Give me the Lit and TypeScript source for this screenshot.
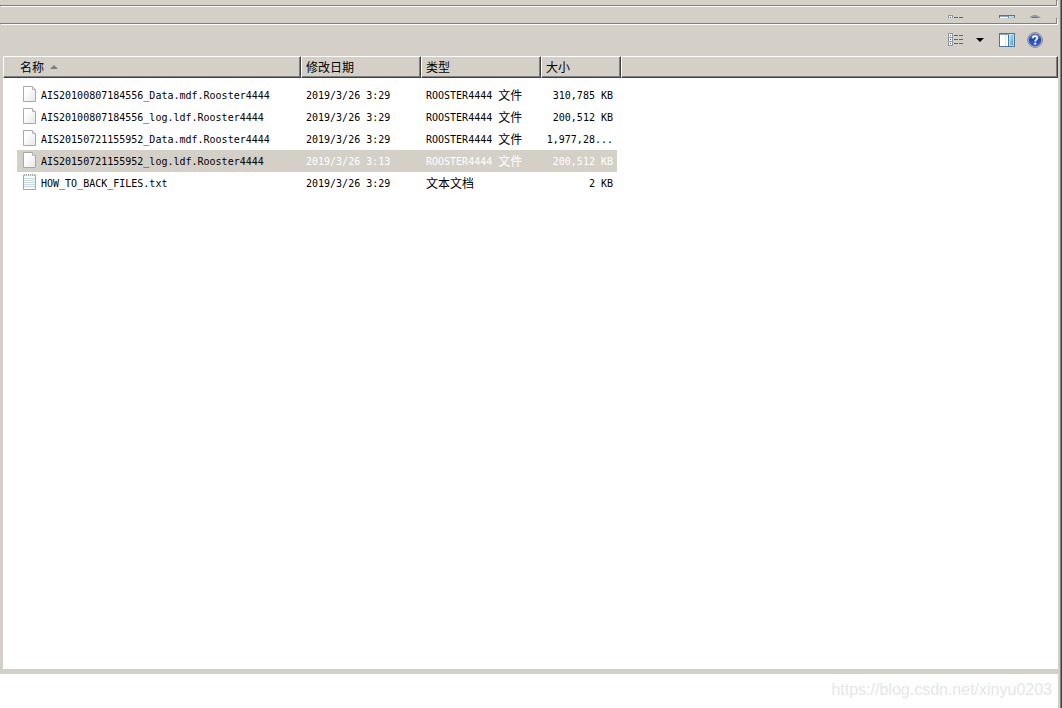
import { LitElement, html, css, svg } from "lit";
import { customElement, property, state } from "lit/decorators.js";

interface FileRow {
  name: string;
  date: string;
  kind: string;
  kindCjk: string;
  size: string;
  text?: boolean;
}

const FILES: FileRow[] = [
  { name: "AIS20100807184556_Data.mdf.Rooster4444", date: "2019/3/26 3:29", kind: "ROOSTER4444 ", kindCjk: "文件", size: "310,785 KB" },
  { name: "AIS20100807184556_log.ldf.Rooster4444", date: "2019/3/26 3:29", kind: "ROOSTER4444 ", kindCjk: "文件", size: "200,512 KB" },
  { name: "AIS20150721155952_Data.mdf.Rooster4444", date: "2019/3/26 3:29", kind: "ROOSTER4444 ", kindCjk: "文件", size: "1,977,28..." },
  { name: "AIS20150721155952_log.ldf.Rooster4444", date: "2019/3/26 3:13", kind: "ROOSTER4444 ", kindCjk: "文件", size: "200,512 KB" },
  { name: "HOW_TO_BACK_FILES.txt", date: "2019/3/26 3:29", kind: "", kindCjk: "文本文档", size: "2 KB", text: true },
];

const listIcon = svg`
  <g shape-rendering="crispEdges">
    <path d="M0 0h5v13H0z" fill="#8798ad"/>
    <path d="M1 1h3v3H1zM1 5h3v3H1zM1 9h3v3H1z" fill="#fff"/>
    <path d="M2 2h1v1H2z" fill="#2d6f96"/><path d="M2 6h1v1H2z" fill="#d01818"/><path d="M2 10h1v1H2z" fill="#2458c0"/>
    <path d="M6 2h4v1H6zM11 2h4v1h-4zM6 6h4v1H6zM11 6h4v1h-4zM6 10h4v1H6zM11 10h4v1h-4z" fill="#536779"/>
  </g>`;

const paneIcon = svg`
  <defs>
    <linearGradient id="pane" x2="1" y2="1"><stop stop-color="#b5e6f3"/><stop offset="1" stop-color="#4aa0c8"/></linearGradient>
  </defs>
  <g shape-rendering="crispEdges">
    <path d="M0 0h16v14H0z" fill="#51749c"/>
    <path d="M1 1h14v1H1z" fill="#86a8c8"/>
    <path d="M1 2h8v11H1z" fill="#fff"/>
    <path d="M6 2h1v11H6z" fill="#dce6ee"/>
    <path d="M10 1h5v12h-5z" fill="#a8e4f2"/>
    <path d="M11 2h3v10h-3z" fill="url(#pane)"/>
  </g>`;

const helpIcon = svg`
  <defs>
    <linearGradient id="orb" x2="0" y2="1"><stop stop-color="#6f91e4"/><stop offset=".45" stop-color="#2446b4"/><stop offset="1" stop-color="#3b69d4"/></linearGradient>
  </defs>
  <circle cx="8" cy="8" r="7.4" fill="#c6cad0" stroke="#858990"/>
  <circle cx="8" cy="8" r="6" fill="url(#orb)" stroke="#24439c" stroke-width=".7"/>
  <path d="M5.8 6.2C5.8 3.3 10.5 3.4 10.3 6.1C10.2 7.7 8.2 7.7 8.2 9.5" fill="none" stroke="#fff" stroke-width="1.8"/>
  <circle cx="8.2" cy="11.7" r="1.1" fill="#fff"/>`;

@customElement("file-icon")
class FileIcon extends LitElement {
  @property({ type: Boolean }) text = false;

  static styles = css`
    :host { display: block; width: 13px; height: 16px; flex: none; }
    .glyph { display: block; }
  `;

  render() {
    return this.text
      ? html`<svg class="glyph" width="13" height="16" viewBox="0 0 13 16" shape-rendering="crispEdges" aria-hidden="true">
          <path d="M0 1h13v15H0z" fill="#a8a8a8"/><path d="M1 2h11v13H1z" fill="#f8f9fa"/>
          <path d="M1 0h1v2H1zM3 0h1v2H3zM5 0h1v2H5zM7 0h1v2H7zM9 0h1v2H9zM11 0h1v2h-1z" fill="#aaa"/>
          <path d="M2 0h1v2H2zM4 0h1v2H4zM6 0h1v2H6zM8 0h1v2H8zM10 0h1v2h-1z" fill="#eee"/>
          <path d="M1 4h11v1H1zM1 6h11v1H1zM1 8h11v1H1zM1 10h11v1H1zM1 12h11v1H1z" fill="#cbdbe2"/>
        </svg>`
      : html`<svg class="glyph" width="13" height="16" viewBox="0 0 13 16" aria-hidden="true">
          <defs><linearGradient id="sheet" x2="1" y2="1"><stop offset=".3" stop-color="#fff"/><stop offset="1" stop-color="#e6e6e6"/></linearGradient></defs>
          <path d="M.5.5H9.500L12.500 3.500V15.500H.5Z" fill="url(#sheet)" stroke="#a8a8a8"/>
          <path d="M9.500.5V3.500H12.500" fill="#e8e8e8" stroke="#b4b4b4"/>
        </svg>`;
  }
}

@customElement("app-root")
class AppRoot extends LitElement {
  @state() private selected = 3;

  static styles = css`
    :host {
      display: block;
      min-height: 100vh;
      box-sizing: border-box;
      background: #fff;
      border-right: 1px solid #404040;
      color: #000;
      font: 10px/22px "DejaVu Sans Mono", "Noto Sans CJK SC", monospace;
    }
    .page { position: relative; min-height: 100vh; border-right: 1px solid #808080; box-sizing: border-box; }
    .frame { min-height: 100vh; border-right: 2px solid #d4d0c8; box-sizing: border-box; }
    .window { display: flex; flex-direction: column; height: calc(100vh - 34px); background: #d4d0c8; }
    .band {
      height: 6px;
      flex: none;
      box-sizing: border-box;
      margin: 0 1px 1px 0;
      border-right: 1px solid #808080;
      border-bottom: 1px solid #808080;
      box-shadow: 1px 1px #fff;
    }
    .strip { height: 11px; flex: none; display: flex; align-items: flex-end; justify-content: flex-end; }
    .ghost { display: flex; height: 3px; overflow: hidden; padding-right: 15px; }
    .tools { display: flex; justify-content: flex-end; align-items: center; height: 31px; flex: none; padding-right: 15px; }
    .strip svg { display: block; flex: none; }
    .gap { width: 35px; }
    .gap-small { width: 12px; }
    .tool { border: 0; background: none; padding: 0; display: flex; align-items: center; justify-content: center; height: 16px; margin-bottom: 2px; }
    .tool.drop { width: 35px; padding-right: 3px; }
    .tool.help { margin-left: 12px; }
    .list { flex: 1; margin: 0 0 5px 3px; background: #fff; }
    .files { width: 100%; border-collapse: separate; border-spacing: 0; table-layout: fixed; }
    th {
      height: 22px;
      box-sizing: border-box;
      padding: 0 0 0 4px;
      background: #d4d0c8;
      border: 1px solid #404040;
      border-top-color: #fff;
      border-left-color: #fff;
      box-shadow: inset -1px -1px #808080;
      text-align: left;
      font-weight: 400;
    }
    th:first-child { padding-left: 16px; }
    .head { font: 12px/20px "Noto Sans CJK SC", sans-serif; border: 0; background: none; padding: 0; color: inherit; display: flex; align-items: center; gap: 6px; }
    .spacer td { height: 6px; }
    td { height: 22px; padding: 0; white-space: pre; }
    .c-name { width: 298px; }
    .c-mid { width: 120px; }
    .c-size { width: 80px; }
    .cell { display: flex; align-items: center; height: 22px; box-sizing: border-box; padding: 2px 0 0 5px; }
    .file { margin-left: 14px; gap: 5px; padding-left: 6px; }
    .file file-icon { margin-bottom: 4px; }
    .size { justify-content: flex-end; padding: 2px 4px 0 0; margin-right: 4px; }
    .selected .cell { background: #d4d0c8; color: #fff; }
    .selected .file { color: #000; }
    .cjk { font: 12px/22px "Noto Sans CJK SC", sans-serif; margin-bottom: 2px; }
    .mark { position: absolute; right: 8px; bottom: 8px; font: 16px/20px "Liberation Sans", sans-serif; color: #e6e6e6; text-decoration: none; }
  `;

  private tool(glyph: unknown, w: number, h: number) {
    return html`<svg width=${w} height=${h} viewBox="0 0 ${w} ${h}" aria-hidden="true">${glyph}</svg>`;
  }

  render() {
    return html`
      <div class="page">
        <div class="frame">
        <main class="window">
          <div class="band"></div>
          <div class="strip">
            <div class="ghost">
              ${this.tool(listIcon, 16, 13)}
              <span class="gap"></span>
              ${this.tool(paneIcon, 16, 14)}
              <span class="gap-small"></span>
              ${this.tool(helpIcon, 16, 16)}
            </div>
          </div>
          <div class="band"></div>
          <div class="tools">
            <button class="tool" aria-label="View">${this.tool(listIcon, 16, 13)}</button>
            <button class="tool drop" aria-label="More views">${this.tool(svg`<path d="M0 0h8L4 4z"/>`, 8, 4)}</button>
            <button class="tool" aria-label="Preview pane">${this.tool(paneIcon, 16, 14)}</button>
            <button class="tool help" aria-label="Help">${this.tool(helpIcon, 16, 16)}</button>
          </div>
          <section class="list">
            <table class="files">
              <colgroup><col class="c-name"><col class="c-mid"><col class="c-mid"><col class="c-size"><col></colgroup>
              <thead>
                <tr>
                  <th><button class="head">名称 ${this.tool(svg`<path d="M0 4L4 0 8 4z" fill="#808080"/>`, 8, 4)}</button></th>
                  <th><button class="head">修改日期</button></th>
                  <th><button class="head">类型</button></th>
                  <th><button class="head">大小</button></th>
                  <th></th>
                </tr>
              </thead>
              <tbody>
                <tr class="spacer"><td colspan="5"></td></tr>
                ${FILES.map((f, i) => html`
                  <tr class=${i === this.selected ? "selected" : ""} @click=${() => (this.selected = i)}>
                    <td><div class="cell file"><file-icon ?text=${f.text}></file-icon>${f.name}</div></td>
                    <td><div class="cell">${f.date}</div></td>
                    <td><div class="cell">${f.kind}<span class="cjk">${f.kindCjk}</span></div></td>
                    <td><div class="cell size">${f.size}</div></td>
                    <td></td>
                  </tr>`)}
              </tbody>
            </table>
          </section>
        </main>
        </div>
        <a class="mark" href="https://blog.csdn.net/xinyu0203">https://blog.csdn.net/xinyu0203</a>
      </div>
    `;
  }
}
